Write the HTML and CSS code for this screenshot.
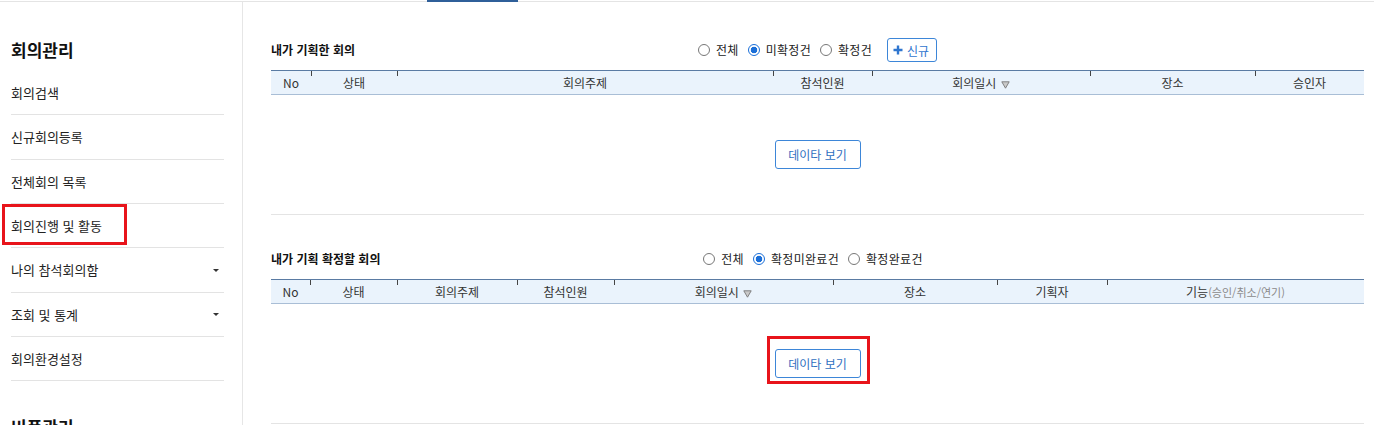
FILE: index.html
```html
<!DOCTYPE html>
<html lang="ko">
<head>
<meta charset="utf-8">
<title>회의관리</title>
<link rel="stylesheet" href="styles.css">
</head>
<body>
<div class="topbar"><span class="tab-ind"></span></div>
<div class="layout">
  <aside class="sidebar">
    <div class="group">
      <h2 class="group-title">회의관리</h2>
      <ul class="menu">
        <li class="menu-item">회의검색</li>
        <li class="menu-item">신규회의등록</li>
        <li class="menu-item">전체회의 목록</li>
        <li class="menu-item marked">회의진행 및 활동<span class="red-box side-box"></span></li>
        <li class="menu-item">나의 참석회의함<span class="caret"></span></li>
        <li class="menu-item">조회 및 통계<span class="caret"></span></li>
        <li class="menu-item">회의환경설정</li>
      </ul>
    </div>
    <div class="group next">
      <h2 class="group-title">비품관리</h2>
    </div>
  </aside>

  <main class="main">
    <section class="panel">
      <div class="panel-head">
        <h3 class="panel-title">내가 기획한 회의</h3>
        <div class="filters">
          <label class="opt"><input type="radio" name="f1"><span>전체</span></label>
          <label class="opt"><input type="radio" name="f1" checked><span>미확정건</span></label>
          <label class="opt"><input type="radio" name="f1"><span>확정건</span></label>
          <button class="btn-new" type="button"><svg width="10" height="10" viewBox="0 0 10 10"><path d="M5 0.5v9M0.5 5h9" stroke="#2f76cf" stroke-width="2.4"/></svg>신규</button>
        </div>
        <div></div>
      </div>
      <table class="grid">
        <colgroup>
          <col style="width:40px"><col style="width:86px"><col style="width:376px"><col style="width:99px"><col style="width:218px"><col style="width:165px"><col style="width:109px">
        </colgroup>
        <thead>
          <tr>
            <th>No</th><th>상태</th><th>회의주제</th><th>참석인원</th>
            <th>회의일시 <svg class="sort" width="9" height="8" viewBox="0 0 9 8"><path d="M0.8 0.8h7.4L4.5 7.2z" fill="#c9c9c9" stroke="#777" stroke-width="0.9"/></svg></th>
            <th>장소</th><th>승인자</th>
          </tr>
        </thead>
      </table>
      <div class="panel-body">
        <button class="btn-data" type="button">데이타 보기</button>
      </div>
    </section>

    <section class="panel second">
      <div class="panel-head">
        <h3 class="panel-title">내가 기획 확정할 회의</h3>
        <div class="filters">
          <label class="opt"><input type="radio" name="f2"><span>전체</span></label>
          <label class="opt"><input type="radio" name="f2" checked><span>확정미완료건</span></label>
          <label class="opt"><input type="radio" name="f2"><span>확정완료건</span></label>
        </div>
        <div></div>
      </div>
      <table class="grid">
        <colgroup>
          <col style="width:39px"><col style="width:87px"><col style="width:120px"><col style="width:97px"><col style="width:219px"><col style="width:164px"><col style="width:110px"><col style="width:257px">
        </colgroup>
        <thead>
          <tr>
            <th>No</th><th>상태</th><th>회의주제</th><th>참석인원</th>
            <th>회의일시 <svg class="sort" width="9" height="8" viewBox="0 0 9 8"><path d="M0.8 0.8h7.4L4.5 7.2z" fill="#c9c9c9" stroke="#777" stroke-width="0.9"/></svg></th>
            <th>장소</th><th>기획자</th><th>기능<span class="sub">(승인/취소/연기)</span></th>
          </tr>
        </thead>
      </table>
      <div class="panel-body">
        <span class="mark-wrap"><button class="btn-data" type="button">데이타 보기</button><span class="red-box btn-box"></span></span>
      </div>
    </section>
  </main>
</div>
</body>
</html>
```

FILE: styles.css
```css
* { box-sizing: border-box; }
html, body { margin: 0; padding: 0; background: #fff; }
body {
  font-family: "Noto Sans CJK KR", "Noto Sans", sans-serif;
  color: #222;
  width: 1374px;
  height: 425px;
  overflow: hidden;
}
.topbar {
  height: 2px;
  display: flex;
  padding-left: 427px;
  background: linear-gradient(to bottom, #fff 0 1px, #e4e4e4 1px 2px);
}
.tab-ind { width: 91px; height: 2px; background: #2f5f99; }

.layout { display: flex; height: 423px; }

.sidebar {
  width: 243px;
  flex: none;
  border-right: 1px solid #e6e6e6;
  padding: 36px 18px 0 11px;
}
.group-title {
  margin: 0 0 9px;
  font-size: 17px;
  font-weight: 700;
  line-height: 24px;
  color: #111;
}
.group.next { margin-top: 34px; }
.menu { list-style: none; margin: 0; padding: 0; }
.menu-item {
  position: relative;
  height: 44.33px;
  border-bottom: 1px solid #e3e3e3;
  display: flex;
  align-items: center;
  justify-content: space-between;
  font-size: 13px;
  line-height: 18px;
  color: #222;
  padding-top: 1px;
}
.caret {
  width: 0; height: 0;
  border-left: 3px solid transparent;
  border-right: 3px solid transparent;
  border-top: 3px solid #333;
  margin-right: 5px;
}
.red-box {
  position: absolute;
  border: 3px solid #e8141b;
  pointer-events: none;
}
.side-box { left: -9px; top: 0; width: 125px; height: 41px; }

.main {
  flex: 1;
  padding: 36px 10px 0 28px;
}
.panel { border-bottom: 1px solid #e4e4e4; }
.panel.second { padding-top: 32px; }
.panel-head {
  display: grid;
  grid-template-columns: 1fr auto 1fr;
  align-items: center;
  height: 24px;
  margin-bottom: 8px;
}
.panel-title {
  margin: 0;
  font-size: 12px;
  font-weight: 700;
  color: #111;
  line-height: 18px;
}
.filters { display: flex; align-items: center; font-size: 12px; color: #222; }
.opt { display: flex; align-items: center; margin-right: 9px; line-height: 18px; letter-spacing: 0.3px; }
.opt input {
  appearance: none;
  -webkit-appearance: none;
  width: 12px; height: 12px;
  margin: 0 6px 0 0;
  border: 1px solid #777;
  border-radius: 50%;
  background: #fff;
}
.opt input:checked {
  border-color: #1b6fd8;
  background: radial-gradient(circle, #1b6fd8 0 3px, #fff 3.6px);
}
.btn-new {
  margin-left: 6px;
  height: 24px;
  width: 50px;
  padding: 0 0 0 5px;
  display: flex;
  align-items: center;
  gap: 4px;
  border: 1px solid #3d86d8;
  border-radius: 3px;
  background: #fff;
  font-family: inherit;
  font-size: 12px;
  color: #2f76cf;
}

.grid {
  width: 100%;
  table-layout: fixed;
  border-collapse: collapse;
}
.grid th {
  position: relative;
  height: 24px;
  padding: 0;
  background: #eaf3fc;
  border-top: 1px solid #5a7ba3;
  border-bottom: 1px solid #a9bed6;
  font-size: 12px;
  font-weight: 400;
  color: #333;
  line-height: 16px;
  text-align: center;
  white-space: nowrap;
}
.grid th + th::before {
  content: "";
  position: absolute;
  left: 0;
  top: 0;
  width: 1px;
  height: 5px;
  background: #444;
}
.sort { vertical-align: -1px; margin-left: 1px; }
.sub { font-size: 11px; color: #8a8a8a; }

.panel-body {
  padding: 45px 0;
  display: flex;
  justify-content: center;
}
.btn-data {
  height: 29px;
  width: 86px;
  border: 1px solid #3d86d8;
  border-radius: 3px;
  background: #fff;
  font-family: inherit;
  font-size: 12px;
  color: #2f6fbf;
  padding: 0;
}
.mark-wrap { position: relative; display: inline-flex; }
.btn-box { left: -8px; top: -13px; width: 103px; height: 48px; }
```
